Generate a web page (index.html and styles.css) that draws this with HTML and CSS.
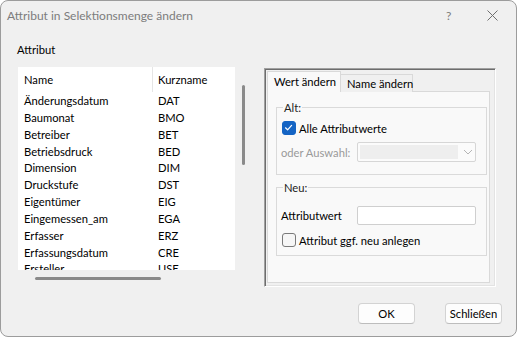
FILE: index.html
```html
<!DOCTYPE html>
<html lang="de">
<head>
<meta charset="utf-8">
<title>Attribut in Selektionsmenge ändern</title>
<link rel="stylesheet" href="styles.css">
</head>
<body>
<div class="window">
  <div class="titlebar">
    <span class="title">Attribut in Selektionsmenge ändern</span>
    <span class="tb-help">?</span>
    <span class="tb-close"><svg width="11" height="11" viewBox="0 0 11 11"><path d="M0.5 0.5 L10.5 10.5 M10.5 0.5 L0.5 10.5" stroke="#6f6f6f" stroke-width="1" fill="none"/></svg></span>
  </div>
  <div class="main">
    <div class="left">
      <div class="section-label">Attribut</div>
      <div class="list-area">
        <div class="list">
          <div class="list-head"><span class="c1">Name</span><span class="sep"></span><span class="c2">Kurzname</span></div>
          <div class="rows">
            <div class="row"><span class="c1">Änderungsdatum</span><span class="c2">DAT</span></div>
            <div class="row"><span class="c1">Baumonat</span><span class="c2">BMO</span></div>
            <div class="row"><span class="c1">Betreiber</span><span class="c2">BET</span></div>
            <div class="row"><span class="c1">Betriebsdruck</span><span class="c2">BED</span></div>
            <div class="row"><span class="c1">Dimension</span><span class="c2">DIM</span></div>
            <div class="row"><span class="c1">Druckstufe</span><span class="c2">DST</span></div>
            <div class="row"><span class="c1">Eigentümer</span><span class="c2">EIG</span></div>
            <div class="row"><span class="c1">Eingemessen_am</span><span class="c2">EGA</span></div>
            <div class="row"><span class="c1">Erfasser</span><span class="c2">ERZ</span></div>
            <div class="row"><span class="c1">Erfassungsdatum</span><span class="c2">CRE</span></div>
            <div class="row"><span class="c1">Ersteller</span><span class="c2">USE</span></div>
          </div>
        </div>
        <div class="vscroll"><div class="vthumb"></div></div>
      </div>
      <div class="hthumb"></div>
    </div>
    <div class="frame">
      <div class="tabs">
        <div class="tab active">Wert ändern</div>
        <div class="tab">Name ändern</div>
      </div>
      <div class="pane">
        <fieldset class="group group-alt">
          <legend>Alt:</legend>
          <div class="check-row">
            <span class="checkbox checked"><svg width="13" height="13" viewBox="0 0 13 13"><path d="M3.5 6.8 L5.6 8.8 L9.6 4.4" stroke="#fff" stroke-width="1.2" fill="none" stroke-linecap="round" stroke-linejoin="round"/></svg></span>
            <span class="check-label">Alle Attributwerte</span>
          </div>
          <div class="field-row">
            <span class="field-label disabled">oder Auswahl:</span>
            <div class="combo">
              <div class="combo-field"></div>
              <svg class="chev" width="10" height="6" viewBox="0 0 10 6"><path d="M1 1 L5 5 L9 1" stroke="#b5b5b5" stroke-width="1" fill="none"/></svg>
            </div>
          </div>
        </fieldset>
        <fieldset class="group group-neu">
          <legend>Neu:</legend>
          <div class="field-row">
            <span class="field-label">Attributwert</span>
            <div class="textbox"></div>
          </div>
          <div class="check-row second">
            <span class="checkbox"></span>
            <span class="check-label">Attribut ggf. neu anlegen</span>
          </div>
        </fieldset>
      </div>
    </div>
  </div>
  <div class="footer">
    <button class="btn">OK</button>
    <button class="btn">Schließen</button>
  </div>
</div>
</body>
</html>
```
FILE: styles.css
```css
* { box-sizing: border-box; }
html, body { margin: 0; padding: 0; background: #ffffff; }
body {
  font-family: "Lato", "Noto Sans", sans-serif;
  font-size: 11.2px;
  color: #000;
}
.window {
  width: 517px;
  height: 337px;
  border: 1px solid #9c9c9c;
  border-radius: 8px;
  background: #f0f0f0;
  display: flex;
  flex-direction: column;
  overflow: hidden;
  white-space: nowrap;
}
.titlebar {
  height: 29px;
  display: flex;
  align-items: center;
  padding-left: 6px;
  color: #7c7c7c;
  font-size: 12px;
}
.title { flex: 1; }
.tb-help { width: 10px; margin-right: 31px; color: #7c7c7c; font-size: 12px; }
.tb-close { width: 11px; height: 11px; margin-right: 18px; display: flex; }

.main {
  display: flex;
  padding-left: 16px;
  height: 258px;
}
.left { width: 247px; display: flex; flex-direction: column; }
.section-label { margin-top: 12px; height: 16px; line-height: 16px; margin-bottom: 9px; }
.list-area { display: flex; margin-left: 1px; }
.list {
  width: 217px;
  height: 203px;
  background: #fff;
  overflow: hidden;
}
.list-head { display: flex; height: 25px; line-height: 25px; }
.list-head .c1 { width: 134px; padding-left: 6px; }
.list-head .sep { width: 1px; background: #e5e5e5; }
.list-head .c2 { padding-left: 5px; }
.rows { padding-top: 1px; }
.row { display: flex; height: 16.85px; line-height: 16.85px; }
.row .c1 { width: 135px; padding-left: 6px; }
.row .c2 { padding-left: 5px; }
.vscroll { margin-left: 7px; width: 3px; }
.vthumb { margin-top: 18px; width: 2.5px; height: 80px; background: #8a8a8a; border-radius: 2px; }
.hthumb { margin-top: 7px; margin-left: 18px; width: 126px; height: 2.5px; background: #8a8a8a; border-radius: 2px; }

.frame {
  margin-top: 38px;
  width: 232px;
  height: 219px;
  border-top: 1px solid #a0a0a0;
  border-left: 1px solid #a0a0a0;
  border-right: 1px solid #ffffff;
  border-bottom: 1px solid #ffffff;
  box-shadow: inset 1px 1px 0 #6d6d6d, inset -1px -1px 0 #e3e3e3;
  padding: 2px 0 0 2px;
  display: flex;
  flex-direction: column;
}
.tabs { display: flex; align-items: flex-end; height: 21px; margin-bottom: -1px; position: relative; z-index: 1; }
.tab {
  height: 18px;
  line-height: 17px;
  padding-left: 6px;
  width: 72px;
  background: #f0f0f0;
  border: 1px solid #d9d9d9;
  border-left: none;
  border-bottom: none;
}
.tab.active {
  width: 74px;
  height: 21px;
  line-height: 20px;
  background: #f9f9f9;
  border-left: 1px solid #d9d9d9;
  border-top: 1px solid #d9d9d9;
}
.pane {
  width: 223px;
  height: 192px;
  border: 1px solid #d9d9d9;
  background: #f9f9f9;
  padding-left: 8px;
}
.group {
  margin: 0;
  width: 211px;
  border: 1px solid #dadada;
  padding: 0 0 0 4px;
}
.group legend { padding: 0 1px; margin-left: 2px; line-height: 15px; color: #222; }
.group-alt { margin-top: 8px; padding-bottom: 12px; }
.group-neu { margin-top: 5px; padding-bottom: 7px; }
.check-row { display: flex; align-items: center; height: 16px; margin-top: 5px; }
.check-row.second { margin-top: 7px; }
.checkbox {
  width: 14px; height: 14px; margin-left: 1px;
  border: 1px solid #7a7a7a; border-radius: 3px; background: #f6f6f6;
  display: flex;
}
.checkbox.checked { background: #1464c4; border-color: #1464c4; }
.checkbox svg { margin: -1px 0 0 -1px; }
.check-label { margin-left: 3px; }
.field-row { display: flex; align-items: center; margin-top: 6px; }
.group-neu .field-row { margin-top: 11px; }
.field-label { width: 76px; }
.field-label.disabled { color: #9a9a9a; }
.combo {
  width: 119px; height: 20px;
  border: 1px solid #d6d6d6; border-radius: 2px; background: #fbfbfb;
  display: flex; align-items: center; padding: 2px;
}
.combo-field { width: 98px; height: 14px; background: #eeeeee; }
.chev { margin-left: 5px; }
.textbox {
  width: 119px; height: 19px;
  border: 1px solid #cfcfcf; border-radius: 2px; background: #fff;
}
.footer {
  display: flex; justify-content: flex-end; gap: 30px;
  padding: 15px 14px 0 0;
}
.btn {
  width: 57px; height: 21px; padding: 0;
  font-family: inherit; font-size: 11.2px; color: #000;
  background: #fdfdfd;
  border: 1px solid #d3d3d3; border-bottom-color: #bdbdbd;
  border-radius: 4px;
}
```
